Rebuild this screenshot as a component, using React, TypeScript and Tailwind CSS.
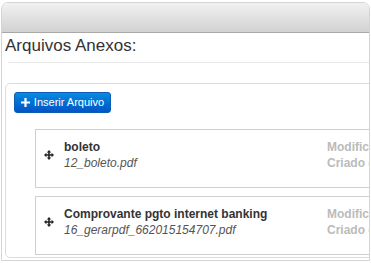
import React from "react";

function MoveIcon() {
  return (
    <svg width="10" height="10" viewBox="0 0 10 10" className="block">
      <path d="M5 0 L7.2 2.4 L5.8 2.4 L5.8 4.2 L7.6 4.2 L7.6 2.8 L10 5 L7.6 7.2 L7.6 5.8 L5.8 5.8 L5.8 7.6 L7.2 7.6 L5 10 L2.8 7.6 L4.2 7.6 L4.2 5.8 L2.4 5.8 L2.4 7.2 L0 5 L2.4 2.8 L2.4 4.2 L4.2 4.2 L4.2 2.4 L2.8 2.4 Z" fill="#222" />
    </svg>
  );
}

function Item({ title, file }: { title: string; file: string }) {
  return (
    <div className="flex h-[59px] w-[400px] items-start border border-[#cfcfcf] bg-white">
      <div className="ml-[8px] mt-[20px] w-[20px]">
        <MoveIcon />
      </div>
      <div className="w-[263px] pt-[9px]">
        <div className="text-[12px] font-bold leading-[16px] text-[#333]">{title}</div>
        <div className="text-[12px] italic leading-[16px] text-[#555]">{file}</div>
      </div>
      <div className="pt-[9px] text-[12px] font-bold leading-[16px] text-[#bbb]">
        <div>Modificado em</div>
        <div>Criado em</div>
      </div>
    </div>
  );
}

export default function App() {
  return (
    <div
      className="h-[263px] w-[371px] overflow-hidden bg-white"
      style={{ fontFamily: '"Liberation Sans", Arial, sans-serif' }}
    >
      <div className="ml-[1px] mt-[2px] h-[259px] w-[369px] overflow-hidden rounded-t-[7px] border border-[#d4d4d4] bg-white">
        <div className="h-[30px] border-b border-[#a8a8a8] bg-gradient-to-b from-[#f1f1f1] to-[#d2d2d2]" />
        <div className="pl-[3px]">
          <div className="pt-[3px] text-[17px] leading-[20px] text-[#333]">Arquivos Anexos:</div>
          <div className="ml-[3px] mt-[6px] border-t border-[#e8e8e8]" />
          <div className="mt-[20px] h-[175px] w-[420px] rounded-[5px] border border-[#dcdcdc] bg-white pl-[8px] pt-[8px]">
            <button className="flex h-[21px] w-[97px] items-center justify-center gap-[4px] rounded-[3px] border border-[#0a5fb4] bg-gradient-to-b from-[#0b8ae0] to-[#0354c6] text-[11px] text-white">
              <svg width="9" height="9" viewBox="0 0 9 9">
                <path d="M3.4 0 H5.6 V3.4 H9 V5.6 H5.6 V9 H3.4 V5.6 H0 V3.4 H3.4 Z" fill="white" />
              </svg>
              <span>Inserir Arquivo</span>
            </button>
            <div className="ml-[21px] mt-[16px] flex flex-col gap-[8px]">
              <Item title="boleto" file="12_boleto.pdf" />
              <Item title="Comprovante pgto internet banking" file="16_gerarpdf_662015154707.pdf" />
            </div>
          </div>
        </div>
      </div>
    </div>
  );
}
